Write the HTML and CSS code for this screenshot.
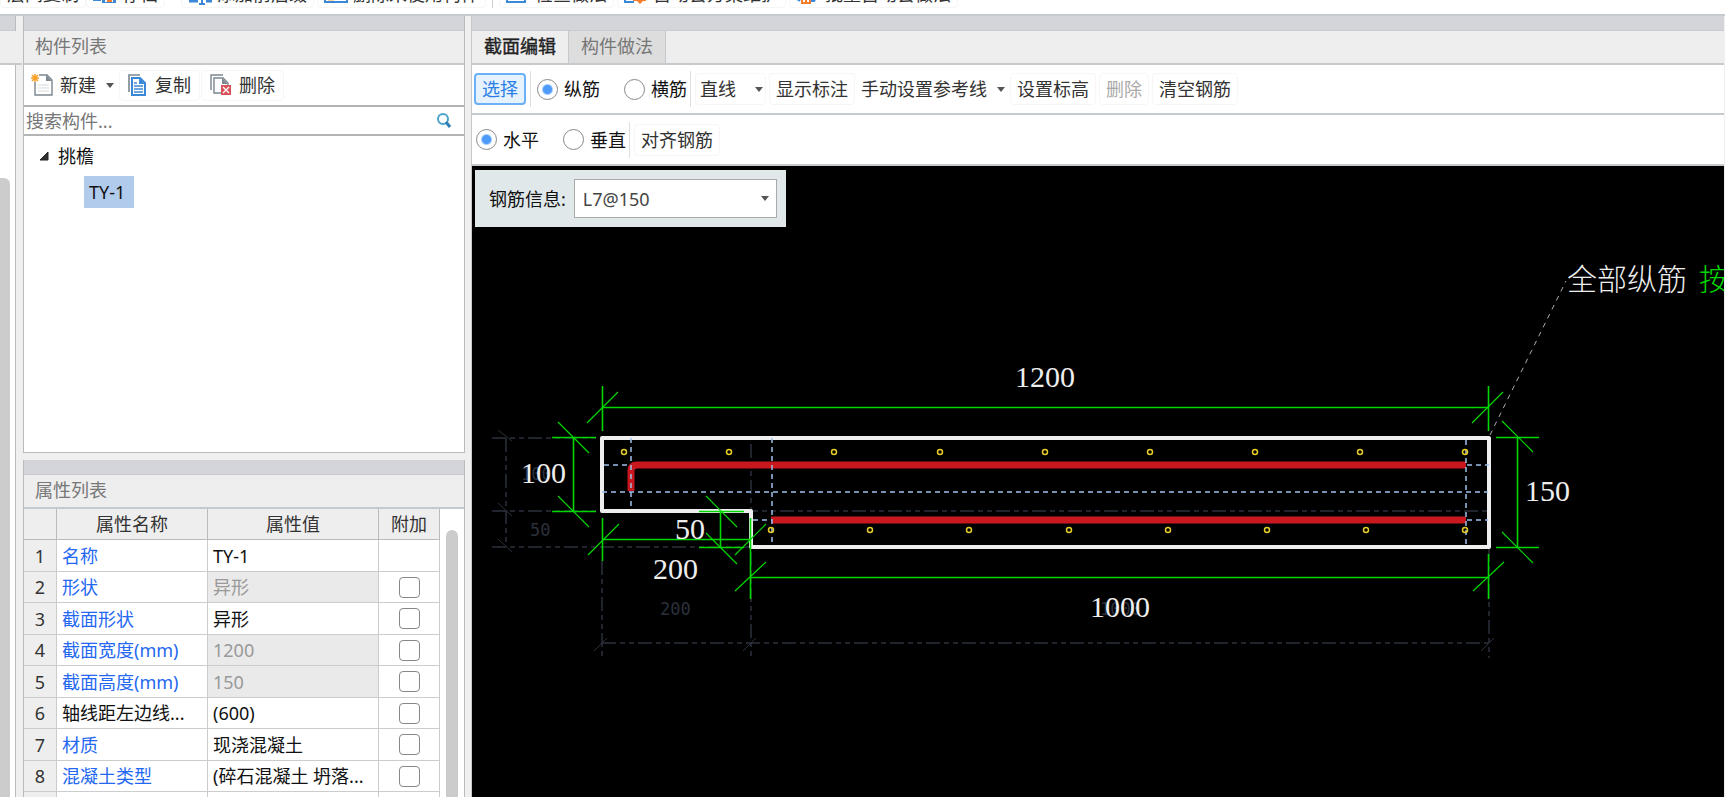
FILE: index.html
```html
<!DOCTYPE html>
<html lang="zh-CN">
<head>
<meta charset="utf-8">
<title>截面编辑</title>
<link rel="stylesheet" href="styles.css">
</head>
<body>
<div class="app">
  <header class="ribbon">
    <button class="ribbon-btn">层间复制</button>
    <button class="ribbon-btn save"><svg class="icon" width="24" height="24"><path d="M0 18h8" stroke="#3c88d8" stroke-width="2"/><path d="M9 6h14v15H9z" fill="#3c88d8"/><path d="M12 8h8v4h-8z" fill="#fff"/><path d="M12 15h8v5h-8z" fill="#fff"/><path d="M14 14h5v6h-5z" fill="#f47c2a"/></svg>存档</button>
    <button class="ribbon-btn prefix"><svg class="icon" width="24" height="24"><path d="M1 19h9M18 19h6" stroke="#3c88d8" stroke-width="3"/><path d="M3 15V8h7M17 8h6v11M14 4v18M11 22h6" fill="none" stroke="#3c88d8" stroke-width="2"/></svg>添加前后缀</button>
    <button class="ribbon-btn unused"><svg class="icon" width="24" height="24"><path d="M1 5h22v15H1z" fill="#fff" stroke="#3c88d8" stroke-width="2"/><path d="M4 18h6" stroke="#f4b04a"/></svg>删除未使用构件</button>
    <span class="ribbon-sep"></span>
    <button class="ribbon-btn check"><svg class="icon" width="24" height="24"><path d="M1 5h18v15H1z" fill="#fff" stroke="#3c88d8" stroke-width="2"/><path d="M5 17h3M12 17h3" stroke="#3c88d8" stroke-width="2"/></svg>检查做法</button>
    <button class="ribbon-btn scheme"><svg class="icon" width="24" height="24"><path d="M1 5v15h9" fill="none" stroke="#3c88d8" stroke-width="2"/><path d="M9 12h13v7h-3l-3 3-3-3H9z" fill="#f47c2a"/><circle cx="15" cy="15" r="2" fill="#fff"/></svg>自动套方案维护</button>
    <button class="ribbon-btn batch"><svg class="icon" width="24" height="24"><path d="M1 6v11l3 2M13 19h5l2-3V6" fill="none" stroke="#3c88d8" stroke-width="2"/><path d="M6 13h8v8H6z" fill="#fff" stroke="#f47c2a" stroke-width="2"/><path d="M10 21v-4h4" fill="none" stroke="#f47c2a" stroke-width="2"/></svg>批量自动套做法</button>
  </header>

  <main class="workspace">
    <aside class="rail">
      <div class="strip"></div>
      <div class="title"></div>
      <div class="rail-body"><div class="rail-thumb"></div></div>
    </aside>

    <div class="side">
      <section class="panel components">
        <div class="strip"></div>
        <h2 class="title">构件列表</h2>
        <div class="tools">
          <button class="tool"><svg class="icon" width="22" height="22"><path d="M4 1h12l5 5v15H4z" fill="#fff" stroke="#7b868f" stroke-width="1.4"/><path d="M15 1l6 6h-6z" fill="#7b868f"/><path d="M7 11h11M7 14h11M7 17h11" stroke="#d6d9dc"/><path d="M0 0h8v8H0z" fill="#fff"/><path d="M4 0v8M0 4h8M1 1l6 6M7 1l-6 6" stroke="#f5a12a" stroke-width="1.6"/></svg>新建<span class="caret"></span></button>
          <button class="tool boxed copy"><svg class="icon" width="20" height="22"><path d="M1 18V1h11" fill="none" stroke="#7b868f" stroke-width="1.6"/><path d="M4 4h8l5 5v12H4z" fill="#fff" stroke="#3c88d8" stroke-width="2"/><path d="M11 4l6 6h-6z" fill="#3c88d8"/><path d="M6 9h3M6 12h9M6 15h9M6 18h9" stroke="#3c88d8" stroke-width="1.4"/></svg>复制</button>
          <button class="tool boxed remove"><svg class="icon" width="22" height="22"><path d="M1 16V1h12" fill="none" stroke="#7b868f" stroke-width="1.4"/><path d="M11 19H4V4h9l5 5v3" fill="none" stroke="#7b868f" stroke-width="1.4"/><path d="M12 4l6 6h-6z" fill="#7b868f"/><path d="M11 11h10v10H11z" fill="#d95058"/><path d="M13 13l6 6M19 13l-6 6" stroke="#fff" stroke-width="1.4"/></svg>删除</button>
        </div>
        <div class="search">
          <input class="search-input" type="text" aria-label="搜索构件" placeholder="搜索构件...">
          <svg width="16" height="16"><circle cx="7" cy="6" r="5" fill="none" stroke="#4ba3cc" stroke-width="2"/><path d="M10 9l4 5" stroke="#2f80b4" stroke-width="3"/></svg>
        </div>
        <div class="tree">
          <div class="tree-root"><svg width="10" height="10"><path d="M9 1v8H1z" fill="#333" stroke="#222"/></svg>挑檐</div>
          <div class="tree-item">TY-1</div>
        </div>
      </section>

      <section class="panel properties">
        <div class="strip"></div>
        <h2 class="title">属性列表</h2>
        <div class="table-wrap">
          <table class="props">
            <colgroup><col class="c-no"><col class="c-name"><col class="c-value"><col class="c-add"></colgroup>
            <thead><tr><th></th><th>属性名称</th><th>属性值</th><th>附加</th></tr></thead>
            <tbody>
              <tr><th>1</th><td class="link">名称</td><td>TY-1</td><td></td></tr>
              <tr><th>2</th><td class="link">形状</td><td class="off">异形</td><td class="add"><input type="checkbox" aria-label="附加 形状"></td></tr>
              <tr><th>3</th><td class="link">截面形状</td><td>异形</td><td class="add"><input type="checkbox" aria-label="附加 截面形状"></td></tr>
              <tr><th>4</th><td class="link">截面宽度(mm)</td><td class="off">1200</td><td class="add"><input type="checkbox" aria-label="附加 截面宽度"></td></tr>
              <tr><th>5</th><td class="link">截面高度(mm)</td><td class="off">150</td><td class="add"><input type="checkbox" aria-label="附加 截面高度"></td></tr>
              <tr><th>6</th><td>轴线距左边线...</td><td>(600)</td><td class="add"><input type="checkbox" aria-label="附加 轴线距左边线"></td></tr>
              <tr><th>7</th><td class="link">材质</td><td>现浇混凝土</td><td class="add"><input type="checkbox" aria-label="附加 材质"></td></tr>
              <tr><th>8</th><td class="link">混凝土类型</td><td>(碎石混凝土 坍落...</td><td class="add"><input type="checkbox" aria-label="附加 混凝土类型"></td></tr>
              <tr><th></th><td></td><td></td><td class="add"><input type="checkbox" aria-label="附加"></td></tr>
            </tbody>
          </table>
          <div class="track"><div class="thumb"></div></div>
        </div>
      </section>
    </div>

    <section class="editor">
      <div class="strip"></div>
      <nav class="tabs">
        <button class="tab active">截面编辑</button>
        <button class="tab">构件做法</button>
      </nav>
      <div class="bar">
        <button class="cmd selected">选择</button>
        <span class="sep"></span>
        <label class="radio"><input type="radio" name="kind" checked>纵筋</label>
        <label class="radio"><input type="radio" name="kind">横筋</label>
        <span class="sep tight"></span>
        <button class="cmd line">直线<span class="caret"></span></button>
        <button class="cmd">显示标注</button>
        <button class="cmd guide">手动设置参考线<span class="caret"></span></button>
        <button class="cmd">设置标高</button>
        <button class="cmd" disabled>删除</button>
        <button class="cmd">清空钢筋</button>
      </div>
      <div class="bar second">
        <label class="radio"><input type="radio" name="dir" checked>水平</label>
        <label class="radio"><input type="radio" name="dir">垂直</label>
        <span class="sep tight"></span>
        <button class="cmd">对齐钢筋</button>
      </div>
      <div class="canvas">
        <svg class="drawing" width="1253" height="631" viewBox="472 166 1253 631">
          <g class="axis">
            <path d="M492 438H602M492 511H1488M492 547H750M506 438V547M602 561V658M751 444V658M1489 548V658M602 643H1488"/>
          </g>
          <path class="axis-tick" d="M498 430l14 11M498 503l14 13M498 539l14 13M594 651l13-13M743 651l13-13M1481 651l13-13"/>
          <g class="small">
            <text x="521" y="480">100</text><text x="530" y="536">50</text>
            <text x="660" y="615">200</text><text x="1100" y="615">1000</text>
          </g>
          <path class="outline" d="M602 438H1489V547H751V511H602Z"/>
          <path class="rebar" d="M631 491V471Q631 465 637 465H1466M771 520H1466"/>
          <path class="guides" d="M631 438V510M772 438V546M602 492H1488M604 465H627M753 520H772M1466 440V547M1467 465H1489M1467 520H1488"/>
          <g class="dots">
            <circle cx="624" cy="452" r="2.5"/><circle cx="729" cy="452" r="2.5"/><circle cx="834" cy="452" r="2.5"/><circle cx="940" cy="452" r="2.5"/><circle cx="1045" cy="452" r="2.5"/><circle cx="1150" cy="452" r="2.5"/><circle cx="1255" cy="452" r="2.5"/><circle cx="1360" cy="452" r="2.5"/><circle cx="1465" cy="452" r="2.5"/>
            <circle cx="771" cy="530" r="2.5"/><circle cx="870" cy="530" r="2.5"/><circle cx="969" cy="530" r="2.5"/><circle cx="1069" cy="530" r="2.5"/><circle cx="1168" cy="530" r="2.5"/><circle cx="1267" cy="530" r="2.5"/><circle cx="1366" cy="530" r="2.5"/><circle cx="1465" cy="530" r="2.5"/>
          </g>
          <path class="dim" d="M602.5 386V431M1488.5 386V431M602 407.5H1489M573.5 438V511M552 437.5H596M552 511.5H596M720.5 511V547M699 511.5H744M699 547.5H744M602.5 518V561M750.5 518V599M602 539.5H751M1488.5 554V599M751 577.5H1489M1517.5 438V547M1496 437.5H1539M1496 547.5H1539"/>
          <path class="dim-tick" d="M587 423l31-31M1472 423l31-31M558 422l31 31M558 496l31 31M706 496l31 31M706 533l31 31M588 555l31-31M735 555l31-31M735 591l31-29M1473 591l31-29M1502 421l31 31M1502 532l31 31"/>
          <path class="leader" d="M1490 435L1566 281"/>
          <g class="figures">
            <text x="1015" y="387">1200</text><text x="521" y="483">100</text><text x="675" y="539">50</text>
            <text x="653" y="579">200</text><text x="1090" y="617">1000</text><text x="1525" y="501">150</text>
          </g>
          <g class="note"><text x="1567" y="290">全部纵筋</text><text class="pick" x="1699" y="290">按</text></g>
        </svg>
        <div class="info">
          <label for="bar-info">钢筋信息:</label>
          <div class="combo"><select id="bar-info"><option>L7@150</option></select><span class="caret"></span></div>
        </div>
      </div>
    </section>
  </main>
</div>
</body>
</html>
```
FILE: styles.css
```css
* { box-sizing: border-box; }
body {
  margin: 0;
  background: #efefef;
  color: #111;
  font: 18px/24px "Noto Sans", "Noto Sans CJK SC", sans-serif;
}
button, input, select { font: inherit; color: inherit; }
button { border: 0; background: none; padding: 0; white-space: nowrap; }
svg { display: block; flex: none; }

.app { height: 100vh; display: flex; flex-direction: column; overflow: hidden; }

.ribbon {
  height: 16px;
  flex: none;
  display: flex;
  align-items: flex-end;
  padding-bottom: 6px;
  background: #fff;
  border-bottom: 2px solid #c5cace;
  overflow: hidden;
}
.ribbon-btn {
  height: 28px;
  flex: none;
  display: flex;
  align-items: center;
  gap: 5px;
  padding: 0 6px;
  border: 1px solid #f6f6f6;
  border-radius: 4px;
  color: #333;
}
.ribbon-btn.prefix { margin-left: 16px; }
.ribbon-btn.unused { margin-left: 3px; }
.ribbon-sep { width: 1px; height: 28px; margin: 0 6px; background: #ccc; }
.ribbon-btn.scheme, .ribbon-btn.batch { margin-left: 3px; }

.workspace { flex: 1; min-height: 0; display: flex; gap: 7px; padding-right: 1px; }
.strip { height: 15px; flex: none; background: #d3d5db; border-bottom: 1px solid #c8ccd0; }
.title {
  height: 34px;
  flex: none;
  margin: 0;
  padding: 3px 11px;
  background: #eee;
  border-bottom: 2px solid #c5cace;
  color: #777;
  font-size: 18px;
  font-weight: 400;
}

.rail { width: 16px; flex: none; display: flex; flex-direction: column; border-right: 1px solid #bbb; }
.rail-body { flex: 1; padding-top: 113px; background: #fff; display: flex; }
.rail-thumb { width: 10px; background: #ccc; border-radius: 0 6px 0 0; }

.side { width: 442px; flex: none; display: flex; flex-direction: column; gap: 7px; min-height: 0; }
.panel { display: flex; flex-direction: column; border: 1px solid #bbb; border-top: 0; background: #fff; }
.components { height: 437px; flex: none; }
.properties { flex: 1; min-height: 0; overflow: hidden; border-bottom: 0; }

.tools { height: 42px; flex: none; display: flex; align-items: center; border-bottom: 2px solid #b4b4b4; padding-left: 7px; }
.tool { height: 31px; display: flex; align-items: center; gap: 7px; color: #333; }
.boxed { border: 1px solid #f6f6f6; border-radius: 4px; padding: 0 8px; }
.copy { margin-left: 5px; }
.remove { margin-left: 1px; }
.caret { width: 8px; border: 4px solid transparent; border-top: 5px solid #555; border-bottom: 0; flex: none; }
.tool .caret { margin-left: 3px; }

.search { height: 29px; flex: none; display: flex; align-items: center; border-bottom: 2px solid #b4b4b4; padding: 0 12px 0 2px; }
.search-input { flex: 1; min-width: 0; height: 26px; border: 0; padding: 0; background: none; outline: 0; }
.search-input::placeholder { color: #777; opacity: 1; }

.tree { flex: 1; padding-top: 8px; }
.tree-root { display: flex; align-items: center; gap: 9px; padding-left: 15px; height: 24px; }
.tree-item { width: 50px; height: 32px; margin: 8px 0 0 60px; padding: 4px 0 0 5px; background: #b1cbec; }

.table-wrap { display: flex; flex: 1; min-height: 0; }
.props { flex: 1; min-width: 0; table-layout: fixed; border-collapse: separate; border-spacing: 0; align-self: flex-start; }
.c-no { width: 33px; }
.c-name { width: 151px; }
.c-value { width: 171px; }
.props th, .props td {
  height: 32px;
  padding: 0 0 0 5px;
  border-right: 1px solid #ccc;
  border-bottom: 1px solid #ccc;
  text-align: left;
  white-space: nowrap;
  overflow: hidden;
}
.props th { padding: 0; background: #eee; color: #333; font-weight: 400; text-align: center; }
.props thead th { height: 31px; border-color: #bbb; }
.props tbody tr:nth-child(even) > * { height: 31px; }
.props .link { color: #2468f2; }
.props .off { background: #eaeaea; color: #999; }
.props .add { padding: 0; text-align: center; }
.add input {
  appearance: none;
  display: block;
  width: 21px;
  height: 21px;
  margin: 0 auto;
  border: 1px solid #888;
  border-radius: 4px;
  background: #fff;
}
.track { width: 24px; flex: none; display: flex; justify-content: center; padding-top: 21px; background: #fff; }
.thumb { width: 12px; background: #ccc; border-radius: 6px 6px 0 0; }

.editor { flex: 1; min-width: 0; margin-left: -1px; display: flex; flex-direction: column; border-left: 1px solid #c5cace; }
.tabs { height: 34px; flex: none; display: flex; background: #eee; border-bottom: 2px solid #c5cace; }
.tab { padding: 0 12px 2px; border-right: 1px solid #c5cace; background: #ddd; color: #777; }
.tab.active { background: #eee; color: #222; -webkit-text-stroke: 0.4px #222; }

.bar { height: 50px; flex: none; display: flex; align-items: center; padding-left: 2px; background: #fff; border-bottom: 2px solid #c5cace; }
.bar.second { height: 51px; padding-left: 4px; }
.cmd { height: 32px; display: flex; align-items: center; padding: 0 6px; margin-right: 3px; border: 1px solid #f6f6f6; border-radius: 4px; color: #333; }
.cmd.selected { border: 2px solid #6cb0f8; background: #e6f2fe; color: #2a7ee6; }
.cmd:disabled { color: #aaa; }
.cmd.line { gap: 19px; padding: 0 2px 0 4px; }
.cmd.guide { gap: 10px; margin: 0; padding: 0 4px 0 2px; border-color: transparent; }
.sep { width: 1px; height: 36px; margin: 0 6px 0 1px; background: #ddd; }
.sep.tight { margin: 0 4px 0 3px; }
.radio { display: flex; align-items: center; gap: 6px; color: #111; }
.radio + .radio { margin-left: 24px; }
.radio input {
  appearance: none;
  width: 21px;
  height: 21px;
  margin: 0;
  border: 1px solid #888;
  border-radius: 50%;
  background: #fff;
}
.radio input:checked { background: radial-gradient(circle, #4c9bfa 4px, #fff 6px); }

.canvas { flex: 1; min-height: 0; position: relative; overflow: hidden; background: #000; padding: 4px 3px; }
.drawing { position: absolute; top: 0; left: 0; }
.info { position: relative; width: max-content; height: 57px; display: flex; align-items: center; gap: 8px; padding: 0 9px 0 14px; background: #e0e8ea; }
.combo { display: grid; align-items: center; }
.combo > * { grid-area: 1 / 1; }
.combo select { appearance: none; width: 203px; height: 39px; padding: 0 8px; border: 1px solid #aaa; border-radius: 0; background: #fff; color: #444; }
.combo .caret { justify-self: end; margin-right: 8px; }

.drawing path { fill: none; }
.axis { stroke: #2b303b; stroke-width: 1.5; stroke-dasharray: 14 4 5 4 5 4; }
.axis-tick { stroke: #2b303b; }
.small { fill: #2b303b; font: 17px "DejaVu Sans Mono", monospace; }
.outline { stroke: #eee; stroke-width: 4; stroke-linejoin: round; }
.rebar { stroke: #c8181e; stroke-width: 7; }
.guides { stroke: #9cc0ea; stroke-width: 1.5; stroke-dasharray: 5 4; }
.dots { fill: none; stroke: #e6cc28; stroke-width: 1.5; }
.dim { stroke: #00d800; stroke-width: 1.6; }
.dim-tick { stroke: #00d800; stroke-width: 1.2; }
.leader { stroke: #aaa; stroke-dasharray: 5 5; }
.figures { fill: #eee; font: 30px "Liberation Serif", serif; }
.note { fill: #eee; font: 300 30px "Noto Sans CJK SC", sans-serif; }
.pick { fill: #00d800; }
```
